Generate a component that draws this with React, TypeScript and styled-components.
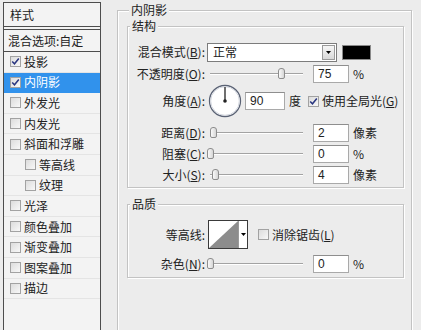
import React from 'react'
import styled, { createGlobalStyle } from 'styled-components'

const GlobalStyle = createGlobalStyle`
  html, body { margin: 0; padding: 0; }
  body {
    width: 421px;
    height: 330px;
    overflow: hidden;
    background: #ececec;
    font-family: 'Noto Sans CJK SC', 'Liberation Sans', sans-serif;
    font-size: 12px;
    color: #222;
  }
`

const Window = styled.div`
  display: flex;
  align-items: flex-start;
  width: 421px;
  height: 330px;
  overflow: hidden;
`

// ---- left style list ----

const Sidebar = styled.div`
  margin: 2px 0 0 3px;
  width: 98px;
  height: 328px;
  box-sizing: border-box;
  border: 1px solid #4d4d4d;
  border-bottom: none;
  background: #f3f3f3;
  display: flex;
  flex-direction: column;
`

const SideHeader = styled.div`
  height: 27px;
  box-sizing: border-box;
  padding-left: 6px;
  display: flex;
  align-items: center;
  line-height: 14px;
  border-bottom: 4px double #4d4d4d;
`

const BlendRow = styled.div`
  height: 22px;
  box-sizing: border-box;
  padding-left: 4px;
  display: flex;
  align-items: center;
  line-height: 14px;
  border-bottom: 1px solid #4d4d4d;
`

const StyleItem = styled.div<{ $indent?: boolean; $selected?: boolean }>`
  height: 20.6px;
  box-sizing: border-box;
  padding-left: ${p => (p.$indent ? 21 : 6)}px;
  display: flex;
  align-items: center;
  gap: 3px;
  line-height: 14px;
  background: ${p => (p.$selected ? '#3192ec' : 'transparent')};
  color: ${p => (p.$selected ? '#fff' : 'inherit')};
  border-bottom: 1px solid ${p => (p.$selected ? '#3192ec' : '#e4e4e4')};
`

const Box = styled.span`
  display: inline-flex;
  align-items: center;
  justify-content: center;
  flex-shrink: 0;
  width: 11px;
  height: 11px;
  box-sizing: border-box;
  border: 1px solid #a2a2a2;
  background: linear-gradient(135deg, #dcdcdc, #f8f8f8);
  svg { display: block; }
`

function Check({ checked }: { checked?: boolean }) {
  return (
    <Box>
      {checked && (
        <svg width="9" height="9" viewBox="0 0 9 9">
          <path d="M1.2 4.4 L3.5 6.8 L7.8 1.6" fill="none" stroke="#2a3680" strokeWidth="1.5" />
        </svg>
      )}
    </Box>
  )
}

// ---- right panel ----

const Main = styled.div`
  margin: 3px 0 0 16px;
`

const Group = styled.fieldset`
  margin: 0;
  box-sizing: border-box;
  border: 1px solid #c3c3c3;
  box-shadow: inset 1px 1px 0 #fff, 1px 1px 0 #fff;
  min-width: 0;
`

const OuterGroup = styled(Group)`
  width: 295px;
  height: 340px;
  padding: 0 7px 0 9px;
`

const InnerGroup = styled(Group)<{ $top: number; $bottom: number }>`
  width: 277px;
  margin-top: ${p => p.$top}px;
  padding: 0 0 ${p => p.$bottom}px 0;
  display: flex;
  flex-direction: column;
`

const Legend = styled.legend`
  margin-left: 2px;
  padding: 0 2px;
  line-height: 14px;
  background: #ececec;
`

const Row = styled.div<{ $h: number; $top?: number }>`
  display: flex;
  align-items: center;
  height: ${p => p.$h}px;
  margin-top: ${p => p.$top ?? 0}px;
  line-height: 14px;
  white-space: nowrap;
`

const Label = styled.span`
  width: 79px;
  box-sizing: border-box;
  padding-right: 2px;
  text-align: right;
  flex-shrink: 0;
`

const Select = styled.div`
  width: 130px;
  height: 19px;
  box-sizing: border-box;
  border: 1px solid #7c7c7c;
  background: #fff;
  display: flex;
  align-items: center;
  padding-left: 5px;
`

const SelectText = styled.span`
  flex: 1;
`

const DropButton = styled.span`
  width: 13px;
  height: 15px;
  margin-right: 1px;
  box-sizing: border-box;
  border: 1px solid #9a9a9a;
  background: linear-gradient(#f6f6f6, #d8d8d8);
  display: flex;
  align-items: center;
  justify-content: center;
`

const Swatch = styled.span`
  width: 29px;
  height: 15px;
  margin-left: 5px;
  box-sizing: border-box;
  border: 1px solid #8a8a8a;
  background: #000;
`

const Slider = styled.div`
  position: relative;
  width: 106px;
  height: 20px;
  flex-shrink: 0;
`

const Track = styled.span`
  position: absolute;
  left: 3px;
  right: 10px;
  top: 9px;
  height: 0;
  border-top: 1px solid #a3a3a3;
  border-bottom: 1px solid #fff;
`

const Thumb = styled.span<{ $left: number }>`
  position: absolute;
  top: 4px;
  left: ${p => p.$left}px;
  width: 7px;
  height: 11px;
  box-sizing: border-box;
  border: 1px solid #8d8d8d;
  border-radius: 3px 3px 2px 2px;
  background: linear-gradient(90deg, #fafafa, #d6d6d6);
`

const NumInput = styled.span<{ $w?: number; $ml?: number }>`
  width: ${p => p.$w ?? 36}px;
  height: 18px;
  margin-left: ${p => p.$ml ?? 0}px;
  box-sizing: border-box;
  border: 1px solid #a9a9a9;
  border-top-color: #8e8e8e;
  background: #fff;
  padding-left: 4px;
  display: flex;
  align-items: center;
  font-family: 'Liberation Sans', Arial, sans-serif;
  font-size: 12px;
  flex-shrink: 0;
`

const Unit = styled.span<{ $ml?: number }>`
  margin-left: ${p => p.$ml ?? 4}px;
`

const Dial = styled.svg`
  margin-left: 1px;
  flex-shrink: 0;
  display: block;
`

const Inline = styled.span<{ $ml: number }>`
  display: inline-flex;
  align-items: center;
  gap: 3px;
  margin-left: ${p => p.$ml}px;
`

const Contour = styled.span`
  display: flex;
  width: 40px;
  height: 29px;
  margin-left: 1px;
  box-sizing: border-box;
  border: 1px solid #3a3a3a;
  background: #fff;
`

const ContourArrow = styled.span`
  flex: 1;
  display: flex;
  align-items: center;
  justify-content: center;
  border-left: 1px solid #9a9a9a;
`

function Arrow() {
  return (
    <svg width="5" height="3" viewBox="0 0 5 3">
      <path d="M0 0 H5 L2.5 3 Z" fill="#000" />
    </svg>
  )
}

function SliderRow({
  label,
  thumb,
  value,
  unit,
  top,
}: {
  label: React.ReactNode
  thumb: number
  value: string
  unit: string
  top?: number
}) {
  return (
    <Row $h={20} $top={top}>
      <Label>{label}</Label>
      <Slider>
        <Track />
        <Thumb $left={thumb} />
      </Slider>
      <NumInput>{value}</NumInput>
      <Unit>{unit}</Unit>
    </Row>
  )
}

const styles = [
  { name: '投影', checked: true },
  { name: '内阴影', checked: true, selected: true },
  { name: '外发光' },
  { name: '内发光' },
  { name: '斜面和浮雕' },
  { name: '等高线', indent: true },
  { name: '纹理', indent: true },
  { name: '光泽' },
  { name: '颜色叠加' },
  { name: '渐变叠加' },
  { name: '图案叠加' },
  { name: '描边' },
]

export default function App() {
  return (
    <>
      <GlobalStyle />
      <Window>
        <Sidebar>
          <SideHeader>样式</SideHeader>
          <BlendRow>混合选项:自定</BlendRow>
          {styles.map(s => (
            <StyleItem key={s.name} $indent={s.indent} $selected={s.selected}>
              <Check checked={s.checked} />
              <span>{s.name}</span>
            </StyleItem>
          ))}
        </Sidebar>

        <Main>
          <OuterGroup>
            <Legend>内阴影</Legend>
            <InnerGroup $top={2} $bottom={2}>
              <Legend>结构</Legend>
              <Row $h={20} $top={9}>
                <Label>
                  混合模式(<u>B</u>):
                </Label>
                <Select>
                  <SelectText>正常</SelectText>
                  <DropButton>
                    <Arrow />
                  </DropButton>
                </Select>
                <Swatch />
              </Row>
              <SliderRow
                top={2}
                label={
                  <>
                    不透明度(<u>O</u>):
                  </>
                }
                thumb={71}
                value="75"
                unit="%"
              />
              <Row $h={34}>
                <Label>
                  角度(<u>A</u>):
                </Label>
                <Dial width="34" height="34" viewBox="0 0 34 34">
                  <circle cx="17" cy="17" r="15.5" fill="#fff" stroke="#5a6274" strokeWidth="1.3" />
                  <circle cx="17" cy="17" r="14.3" fill="none" stroke="#d4d8e0" strokeWidth="1" />
                  <line x1="17" y1="17" x2="17" y2="3" stroke="#222" strokeWidth="1.3" />
                  <circle cx="17" cy="17" r="1.8" fill="#222" />
                </Dial>
                <NumInput $w={40} $ml={3}>
                  90
                </NumInput>
                <Unit>度</Unit>
                <Inline $ml={7}>
                  <Check checked />
                  <span>
                    使用全局光(<u>G</u>)
                  </span>
                </Inline>
              </Row>
              <SliderRow
                top={5}
                label={
                  <>
                    距离(<u>D</u>):
                  </>
                }
                thumb={3}
                value="2"
                unit="像素"
              />
              <SliderRow
                top={1}
                label={
                  <>
                    阻塞(<u>C</u>):
                  </>
                }
                thumb={0}
                value="0"
                unit="%"
              />
              <SliderRow
                top={1}
                label={
                  <>
                    大小(<u>S</u>):
                  </>
                }
                thumb={5}
                value="4"
                unit="像素"
              />
            </InnerGroup>

            <InnerGroup $top={9} $bottom={3}>
              <Legend>品质</Legend>
              <Row $h={29} $top={9}>
                <Label>等高线:</Label>
                <Contour>
                  <svg width="29" height="27" viewBox="0 0 29 27">
                    <path d="M0 27 L29 0 L29 27 Z" fill="#8c8c8c" />
                  </svg>
                  <ContourArrow>
                    <Arrow />
                  </ContourArrow>
                </Contour>
                <Inline $ml={10}>
                  <Check />
                  <span>
                    消除锯齿(<u>L</u>)
                  </span>
                </Inline>
              </Row>
              <SliderRow
                top={5}
                label={
                  <>
                    杂色(<u>N</u>):
                  </>
                }
                thumb={0}
                value="0"
                unit="%"
              />
            </InnerGroup>
          </OuterGroup>
        </Main>
      </Window>
    </>
  )
}
